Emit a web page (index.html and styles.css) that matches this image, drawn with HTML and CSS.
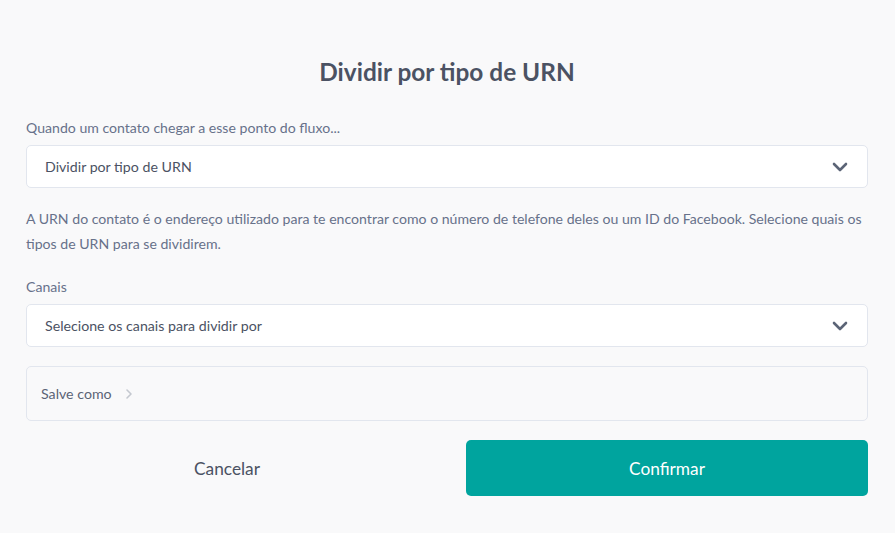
FILE: index.html
```html
<!DOCTYPE html>
<html lang="pt">
<head>
<meta charset="utf-8">
<link rel="stylesheet" href="styles.css">
</head>
<body>
<div class="modal">
  <h1 class="title">Dividir por tipo de URN</h1>
  <div class="label first">Quando um contato chegar a esse ponto do fluxo...</div>
  <div class="select">
    <span>Dividir por tipo de URN</span>
    <svg class="chev" width="16" height="10" viewBox="0 0 16 10"><path d="M2 2 L8 8 L14 2" fill="none" stroke="#5b6476" stroke-width="2.6" stroke-linecap="round" stroke-linejoin="round"/></svg>
  </div>
  <p class="desc">A URN do contato é o endereço utilizado para te encontrar como o número de telefone deles ou um ID do Facebook. Selecione quais os tipos de URN para se dividirem.</p>
  <div class="label">Canais</div>
  <div class="select">
    <span>Selecione os canais para dividir por</span>
    <svg class="chev" width="16" height="10" viewBox="0 0 16 10"><path d="M2 2 L8 8 L14 2" fill="none" stroke="#5b6476" stroke-width="2.6" stroke-linecap="round" stroke-linejoin="round"/></svg>
  </div>
  <div class="save">
    <span>Salve como</span>
    <svg class="small-chev" width="8" height="12" viewBox="0 0 8 12"><path d="M2 2 L6 6 L2 10" fill="none" stroke="#c4c8cf" stroke-width="1.6" stroke-linecap="round" stroke-linejoin="round"/></svg>
  </div>
  <div class="buttons">
    <button class="btn cancel">Cancelar</button>
    <button class="btn confirm">Confirmar</button>
  </div>
</div>
</body>
</html>
```
FILE: styles.css
```css
html, body {
  margin: 0;
  padding: 0;
  background: #f9f9fa;
  font-family: Lato, "Open Sans", sans-serif;
}
.modal {
  padding: 55px 27px 0 26px;
  display: flex;
  flex-direction: column;
}
.title {
  margin: 0;
  font-size: 24.4px;
  font-weight: 700;
  color: #4b5263;
  text-align: center;
  line-height: 34px;
}
.label {
  font-size: 14.1px;
  color: #67718a;
  line-height: 20px;
  margin-top: 21px;
  margin-bottom: 7px;
}
.label.first {
  margin-top: 29px;
  margin-bottom: 7px;
}
.select {
  display: flex;
  align-items: center;
  justify-content: space-between;
  height: 41px;
  background: #fff;
  border: 1px solid #e2e6ee;
  border-radius: 5px;
  padding: 0 19px 0 18px;
  font-size: 14.2px;
  color: #4b5263;
}
.chev {
  display: block;
}
.desc {
  margin: 18px 0 0 0;
  font-size: 14.1px;
  line-height: 25px;
  color: #67718a;
}
.save {
  margin-top: 19px;
  height: 53px;
  border: 1px solid #e2e6ee;
  border-radius: 5px;
  display: flex;
  align-items: center;
  gap: 13px;
  padding-left: 14px;
  font-size: 14.2px;
  color: #5b6476;
}
.buttons {
  margin-top: 19px;
  display: flex;
  gap: 38px;
}
.btn {
  flex: 1;
  height: 56px;
  border: none;
  border-radius: 5px;
  font-family: Lato, "Open Sans", sans-serif;
  font-size: 17.3px;
  cursor: pointer;
}
.cancel {
  background: transparent;
  color: #4b5263;
}
.confirm {
  background: #00a49e;
  color: #fff;
}
```
